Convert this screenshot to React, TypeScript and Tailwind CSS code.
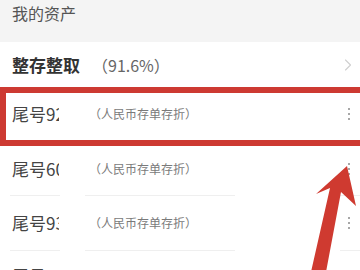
import { ChevronRight } from 'lucide-react';

const font = { fontFamily: '"Noto Sans CJK SC", "Noto Sans", sans-serif' };

function Kebab() {
    return (
        <div className="flex flex-col items-center gap-[3px]">
            <span className="h-[2px] w-[2px] rounded-full bg-[#8a8a8a]" />
            <span className="h-[2px] w-[2px] rounded-full bg-[#8a8a8a]" />
            <span className="h-[2px] w-[2px] rounded-full bg-[#8a8a8a]" />
        </div>
    );
}

function Separator() {
    return (
        <div className="flex h-px">
            <div className="ml-[10px] w-[50px] bg-[#efefef]" />
            <div className="ml-[25px] w-[150px] bg-[#efefef]" />
            <div className="ml-[105px] flex-1 bg-[#efefef]" />
        </div>
    );
}

function AccountRow({ no, pl = 'pl-3', pr = 'pr-[10px]' }: { no: string; pl?: string; pr?: string }) {
    return (
        <div className={`flex flex-1 items-center ${pl} ${pr}`}>
            <div className="w-[47px] overflow-hidden whitespace-nowrap text-[17px] text-[#444]">{no}</div>
            <div className="ml-[30px] text-[12px] text-[#7a7a7a]">（人民币存单存折）</div>
            <div className="ml-auto"><Kebab /></div>
        </div>
    );
}

export default function App() {
    return (
        <div className="relative h-[270px] w-[360px] overflow-hidden bg-white" style={font}>
            <div className="flex h-[42px] items-start bg-[#f4f4f4] pl-3 pt-[1px] text-[16px] text-[#555]">我的资产</div>

            <div className="flex h-[45px] items-center pl-3 pr-[2px]">
                <span className="text-[17px] font-bold text-[#333]">整存整取</span>
                <span className="ml-[12px] text-[16px] text-[#666]">（91.6%）</span>
                <ChevronRight className="ml-auto text-[#cfcfcf]" size={20} strokeWidth={1.3} />
            </div>

            <div className="flex h-[59px] w-[372px] border-[6px] border-[#cd3a32] pb-[6px]">
                <AccountRow no="尾号92" pl="pl-[6px]" pr="pr-[16px]" />
            </div>

            <div className="flex h-[49px] pb-[4px]">
                <AccountRow no="尾号60" />
            </div>
            <Separator />
            <div className="flex h-[54px]">
                <AccountRow no="尾号93" />
            </div>
            <Separator />
            <div className="flex h-[30px] pt-3 pl-3 text-[17px] text-[#444]">
                <div className="w-[47px] overflow-hidden whitespace-nowrap">尾号88</div>
            </div>

            <svg className="absolute left-0 top-0" width="360" height="270" viewBox="0 0 360 270">
                <polygon
                    points="347,166 356,206 341,192 326,272 311,272 330,188 316,194"
                    fill="#cf3a30"
                />
            </svg>
        </div>
    );
}
